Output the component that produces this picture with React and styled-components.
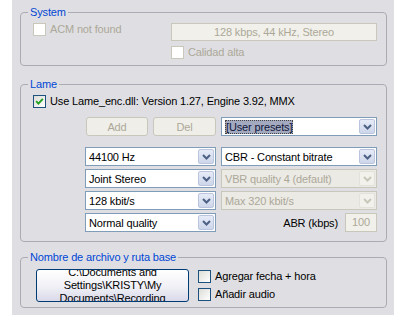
import React from "react";
import styled, { createGlobalStyle } from "styled-components";

const GlobalStyle = createGlobalStyle`
  html, body {
    margin: 0;
    padding: 0;
    background: #ffffff;
  }
  body {
    font-family: "Liberation Sans", Arial, sans-serif;
    font-size: 11px;
    letter-spacing: -0.15px;
    color: #000;
  }
`;

const Page = styled.div`
  width: 408px;
  height: 322px;
  padding-left: 12px;
  box-sizing: border-box;
`;

const Panel = styled.div`
  width: 382px;
  height: 315px;
  background: #dfdfe3;
  box-sizing: border-box;
  padding: 6px 0 0 8px;
  display: flex;
  flex-direction: column;
`;

const Group = styled.fieldset`
  box-sizing: border-box;
  width: 367px;
  height: ${(p) => p.$h}px;
  margin: 0 0 ${(p) => p.$mb || 0}px 0;
  min-width: 0;
  padding: ${(p) => p.$pt || 4}px 8px 0 ${(p) => p.$pl || 12}px;
  border: 1px solid #ababb4;
  border-radius: 4px;
`;

const Legend = styled.legend`
  color: #0046d5;
  padding: 0 2px;
  margin-left: -${(p) => p.$ml || 5}px;
  line-height: 13px;
  height: 13px;
`;

const CheckRow = styled.label`
  display: flex;
  align-items: center;
  gap: 4px;
  height: 13px;
  line-height: 13px;
  color: ${(p) => (p.$disabled ? "#aca899" : "#000")};
  white-space: nowrap;
`;

const Box = styled.span`
  width: 13px;
  height: 13px;
  box-sizing: border-box;
  flex: none;
  border: 1px solid ${(p) => (p.$disabled ? "#cac8bb" : "#1c5180")};
  background: ${(p) =>
    p.$disabled ? "#ffffff" : "linear-gradient(135deg, #dcdcd7, #ffffff)"};
  display: flex;
  align-items: center;
  justify-content: center;
`;

const CheckBox = ({ checked, disabled, children }) => (
  <CheckRow $disabled={disabled}>
    <Box $disabled={disabled}>
      {checked && (
        <svg width="9" height="9" viewBox="0 0 9 9">
          <path d="M1.2 4.2 L3.4 6.6 L7.8 1.8" fill="none" stroke="#21a121" strokeWidth="1.9" />
        </svg>
      )}
    </Box>
    {children}
  </CheckRow>
);

const SystemGrid = styled.div`
  display: grid;
  grid-template-columns: 138px 206px;
  align-items: start;
`;

const Stack = styled.div`
  display: flex;
  flex-direction: column;
  gap: ${(p) => p.$gap || 0}px;
`;

const Edit = styled.div`
  box-sizing: border-box;
  height: ${(p) => p.$h || 18}px;
  width: ${(p) => p.$w || "auto"};
  border: 1px solid #c9c7ba;
  background: #f1f0ea;
  color: #aca899;
  display: flex;
  align-items: center;
  justify-content: center;
  line-height: 13px;
`;

const LameCheck = styled.div`
  margin-bottom: 9px;
`;

const Grid = styled.div`
  display: grid;
  grid-template-columns: 131px 156px;
  column-gap: 5px;
  row-gap: ${(p) => p.$rowGap || 0}px;
  margin-left: 52px;
  margin-bottom: ${(p) => p.$mb || 0}px;
`;

const ButtonPair = styled.div`
  display: flex;
  gap: 5px;
  padding-left: 1px;
`;

const FlatButton = styled.div`
  box-sizing: border-box;
  width: ${(p) => p.$w}px;
  height: 19px;
  border: 1px solid #c9c7ba;
  border-radius: 3px;
  background: #efeee8;
  color: #aca899;
  display: flex;
  align-items: center;
  justify-content: center;
`;

const ComboBox = styled.div`
  box-sizing: border-box;
  height: 19px;
  border: 1px solid ${(p) => (p.$disabled ? "#c9c7ba" : "#7f9db9")};
  background: ${(p) => (p.$disabled ? "#ebeae4" : "#ffffff")};
  color: ${(p) => (p.$disabled ? "#aca899" : "#000")};
  display: flex;
  align-items: stretch;
  padding: 1px;
`;

const ComboText = styled.div`
  flex: 1;
  display: flex;
  align-items: center;
  padding-left: 2px;
  white-space: nowrap;
  overflow: hidden;
`;

const Selected = styled.span`
  background: #a3aac0;
  color: #10163a;
  outline: 1px dotted #444;
  outline-offset: -1px;
  padding: 0 1px;
  line-height: 14px;
`;

const DropButton = styled.div`
  width: 16px;
  flex: none;
  box-sizing: border-box;
  border: 1px solid ${(p) => (p.$disabled ? "#e2e1da" : "#bac5dd")};
  border-radius: 2px;
  background: ${(p) =>
    p.$disabled ? "#f2f1ec" : "linear-gradient(#e6ebf7, #cdd6ea)"};
  display: flex;
  align-items: center;
  justify-content: center;
`;

const Combo = ({ disabled, children }) => (
  <ComboBox $disabled={disabled}>
    <ComboText>{children}</ComboText>
    <DropButton $disabled={disabled}>
      <svg width="9" height="6" viewBox="0 0 9 6">
        <path
          d="M1 1 L4.5 4.5 L8 1"
          fill="none"
          stroke={disabled ? "#c9c7ba" : "#4d6185"}
          strokeWidth="2"
        />
      </svg>
    </DropButton>
  </ComboBox>
);

const AbrRow = styled.div`
  display: flex;
  justify-content: flex-end;
  align-items: center;
  gap: 7px;
`;

const PathRow = styled.div`
  display: flex;
  align-items: flex-start;
  gap: 9px;
`;

const PathButton = styled.button`
  box-sizing: border-box;
  width: 153px;
  height: 33px;
  padding: 0 4px;
  border: 1px solid #003c74;
  border-radius: 3px;
  background: linear-gradient(#ffffff, #f0f0f6 55%, #d9d9ea);
  font: inherit;
  letter-spacing: inherit;
  line-height: 13px;
  color: #000;
  overflow: hidden;
  display: flex;
  align-items: center;
  justify-content: center;
  text-align: center;
`;

const PathChecks = styled.div`
  display: flex;
  flex-direction: column;
  gap: 5px;
  padding-top: 1px;
`;

export default function App() {
  return (
    <>
      <GlobalStyle />
      <Page>
        <Panel>
          <Group $h={60} $mb={12}>
            <Legend>System</Legend>
            <SystemGrid>
              <CheckBox disabled>ACM not found</CheckBox>
              <Stack $gap={5}>
                <Edit>128 kbps, 44 kHz, Stereo</Edit>
                <CheckBox disabled>Calidad alta</CheckBox>
              </Stack>
            </SystemGrid>
          </Group>

          <Group $h={164} $mb={9}>
            <Legend>Lame</Legend>
            <LameCheck>
              <CheckBox checked>Use Lame_enc.dll: Version 1.27, Engine 3.92, MMX</CheckBox>
            </LameCheck>
            <Grid $mb={11}>
              <ButtonPair>
                <FlatButton $w={62}>Add</FlatButton>
                <FlatButton $w={63}>Del</FlatButton>
              </ButtonPair>
              <Combo>
                <Selected>[User presets]</Selected>
              </Combo>
            </Grid>
            <Grid $rowGap={3}>
              <Combo>44100 Hz</Combo>
              <Combo>CBR - Constant bitrate</Combo>
              <Combo>Joint Stereo</Combo>
              <Combo disabled>VBR quality 4 (default)</Combo>
              <Combo>128 kbit/s</Combo>
              <Combo disabled>Max 320 kbit/s</Combo>
              <Combo>Normal quality</Combo>
              <AbrRow>
                ABR (kbps)
                <Edit $h={19} $w="32px">100</Edit>
              </AbrRow>
            </Grid>
          </Group>

          <Group $h={57} $pt={5} $pl={15}>
            <Legend $ml={8}>Nombre de archivo y ruta base</Legend>
            <PathRow>
              <PathButton>
                C:\Documents and
                <br />
                Settings\KRISTY\My
                <br />
                Documents\Recording
              </PathButton>
              <PathChecks>
                <CheckBox>Agregar fecha + hora</CheckBox>
                <CheckBox>Añadir audio</CheckBox>
              </PathChecks>
            </PathRow>
          </Group>
        </Panel>
      </Page>
    </>
  );
}
